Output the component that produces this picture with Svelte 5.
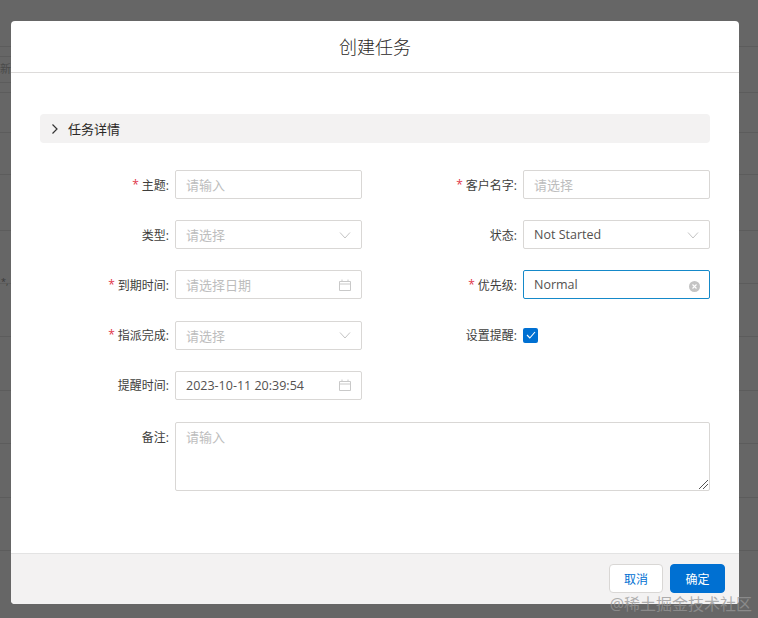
<script>
  const leftRows = [
    { label: '主题', req: true, kind: 'text', ph: '请输入' },
    { label: '类型', kind: 'select', ph: '请选择' },
    { label: '到期时间', req: true, kind: 'date', ph: '请选择日期' },
    { label: '指派完成', req: true, kind: 'select', ph: '请选择' },
    { label: '提醒时间', kind: 'date', value: '2023-10-11 20:39:54' }
  ];
  const rightRows = [
    { label: '客户名字', req: true, kind: 'text', ph: '请选择' },
    { label: '状态', kind: 'select', value: 'Not Started' },
    { label: '优先级', req: true, kind: 'clear', value: 'Normal' },
    { label: '设置提醒', kind: 'check' }
  ];
  const bgLines = [46, 92, 132, 174, 230, 283, 336, 390, 443, 497, 550];
</script>

{#snippet row(r)}
  <div class="row">
    <div class="label">{#if r.req}<span class="req">*</span>{/if}<span>{r.label}:</span></div>
    {#if r.kind === 'check'}
      <span class="check">
        <svg width="10" height="8" viewBox="0 0 10 8"><path d="M1 4l2.8 3L9 1" fill="none" stroke="#fff" stroke-width="1.1" /></svg>
      </span>
    {:else}
      <div class="input" class:focus={r.kind === 'clear'}>
        {#if r.value}<span class="val">{r.value}</span>{:else}<span class="ph">{r.ph}</span>{/if}
        {#if r.kind === 'select'}
          <svg class="icon" width="12" height="8" viewBox="0 0 12 8"><path d="M1 1.5l5 5.5 5-5.5" fill="none" stroke="#c4c4c4" stroke-width="1" /></svg>
        {:else if r.kind === 'date'}
          <svg class="icon" width="12" height="12" viewBox="0 0 12 12"><path d="M.5 2.5h11v9H.5zM.5 5h11M3 .5v2M9 .5v2" fill="none" stroke="#c9c9c9" stroke-width="1" /></svg>
        {:else if r.kind === 'clear'}
          <svg class="icon clear" width="11" height="11" viewBox="0 0 11 11"><circle cx="5.5" cy="5.5" r="5.5" fill="#c4c4c4" /><path d="M3.5 3.5l4 4M7.5 3.5l-4 4" stroke="#fff" stroke-width="1.1" /></svg>
        {/if}
      </div>
    {/if}
  </div>
{/snippet}

<div class="screen">
  <div class="backdrop">
    {#each bgLines as y}
      <div class="bgline" style="top:{y}px"></div>
    {/each}
    <span class="bgbtn"></span>
    <span class="bgtext">新</span>
    <span class="bgnote">*,</span>
  </div>
  <div class="modal">
    <header>创建任务</header>
    <div class="body">
      <div class="section">
        <svg width="8" height="12" viewBox="0 0 8 12"><path d="M1.5 1.5L6 6l-4.5 4.5" fill="none" stroke="#333" stroke-width="1.2" /></svg>
        <span>任务详情</span>
      </div>
      <div class="columns">
        <div class="col">{#each leftRows as r}{@render row(r)}{/each}</div>
        <div class="col">{#each rightRows as r}{@render row(r)}{/each}</div>
      </div>
      <div class="row note">
        <div class="label"><span>备注:</span></div>
        <div class="textarea">
          <span class="ph">请输入</span>
          <svg class="grip" width="9" height="9" viewBox="0 0 9 9"><path d="M0 9L9 0M4 9l5-5" stroke="#555" stroke-width="1" fill="none" /></svg>
        </div>
      </div>
    </div>
    <footer>
      <button class="btn">取消</button>
      <button class="btn primary">确定</button>
    </footer>
  </div>
  <div class="mark">@稀土掘金技术社区</div>
</div>

<style>
  :global(body) { margin: 0; }
  .screen {
    position: relative;
    width: 758px;
    height: 618px;
    overflow: hidden;
    box-sizing: border-box;
    padding: 21px 19px 14px 11px;
    background: #666;
    font-family: "Open Sans", "Noto Sans CJK SC", sans-serif;
    font-size: 13px;
    color: #3e3e3c;
  }
  .backdrop { position: absolute; inset: 0; }
  .bgline { position: absolute; left: 0; right: 0; height: 1px; background: #5c5c5c; }
  .bgbtn { position: absolute; left: 0; top: 56px; width: 11px; height: 27px; box-sizing: border-box; border: 1px solid #5c5c5c; border-left: 0; border-right: 0; }
  .bgtext { position: absolute; left: 0; top: 60px; font-size: 11px; color: #4a4a4a; }
  .bgnote { position: absolute; left: 1px; top: 275px; font-size: 9px; color: #3a3a3a; }
  .modal {
    position: relative;
    height: 583px;
    display: flex;
    flex-direction: column;
    background: #fff;
    border-radius: 4px;
    overflow: hidden;
  }
  header {
    height: 52px;
    box-sizing: border-box;
    border-bottom: 1px solid #dddbda;
    display: flex;
    align-items: center;
    justify-content: center;
    font-size: 18px;
    font-weight: 300;
    color: #2b2826;
    flex: none;
    padding-bottom: 2px;
  }
  .body {
    flex: 1;
    padding: 41px 29px 0;
  }
  .section {
    height: 29px;
    background: #f3f2f2;
    border-radius: 4px;
    display: flex;
    align-items: center;
    gap: 9px;
    padding-left: 11px;
    font-size: 13px;
    color: #2b2826;
  }
  .columns {
    display: grid;
    grid-template-columns: 322px 322px;
    justify-content: space-between;
    margin-top: 27px;
  }
  .col {
    display: flex;
    flex-direction: column;
    gap: 21.2px;
  }
  .row {
    display: flex;
    align-items: center;
    height: 29px;
  }
  .label {
    width: 135px;
    flex: none;
    display: flex;
    justify-content: flex-end;
    align-items: center;
    gap: 3px;
    padding-right: 6px;
    box-sizing: border-box;
    font-size: 12px;
    color: #3e3e3c;
  }
  .req { color: #e0364b; font-size: 12px; line-height: 1; }
  .input {
    width: 187px;
    height: 29px;
    box-sizing: border-box;
    border: 1px solid #d9d7d5;
    border-radius: 2px;
    display: flex;
    align-items: center;
    justify-content: space-between;
    padding: 0 10px;
    background: #fff;
  }
  .input.focus { border-color: #1589c9; }
  .ph { color: #bdbdbd; font-size: 13px; }
  .val { color: #54514f; font-size: 12.5px; }
  .clear { margin-right: -1px; margin-top: 4px; }
  .check {
    width: 15px;
    height: 15px;
    border-radius: 2px;
    background: #0070d2;
    display: flex;
    align-items: center;
    justify-content: center;
  }
  .note {
    height: 69px;
    align-items: flex-start;
    margin-top: 22px;
  }
  .note .label { padding-top: 6px; }
  .textarea {
    position: relative;
    flex: 1;
    height: 69px;
    box-sizing: border-box;
    border: 1px solid #d9d7d5;
    border-radius: 2px;
    padding: 4px 10px;
  }
  .grip { position: absolute; right: 1px; bottom: 1px; }
  footer {
    height: 51px;
    flex: none;
    box-sizing: border-box;
    border-top: 1px solid #e3e3e3;
    background: #f3f2f2;
    display: flex;
    align-items: center;
    justify-content: flex-end;
    gap: 7px;
    padding: 0 14px 1px 0;
  }
  .btn {
    width: 54px;
    height: 29px;
    box-sizing: border-box;
    border: 1px solid #d9d7d5;
    border-radius: 4px;
    background: #fff;
    color: #0070d2;
    font-family: inherit;
    font-size: 12px;
    padding: 0;
  }
  .btn.primary { width: 55px; background: #0070d2; border-color: #0070d2; color: #fff; }
  .mark {
    position: absolute;
    right: 6px;
    bottom: 3px;
    font-size: 16px;
    color: rgba(150, 150, 150, 0.75);
  }
</style>
